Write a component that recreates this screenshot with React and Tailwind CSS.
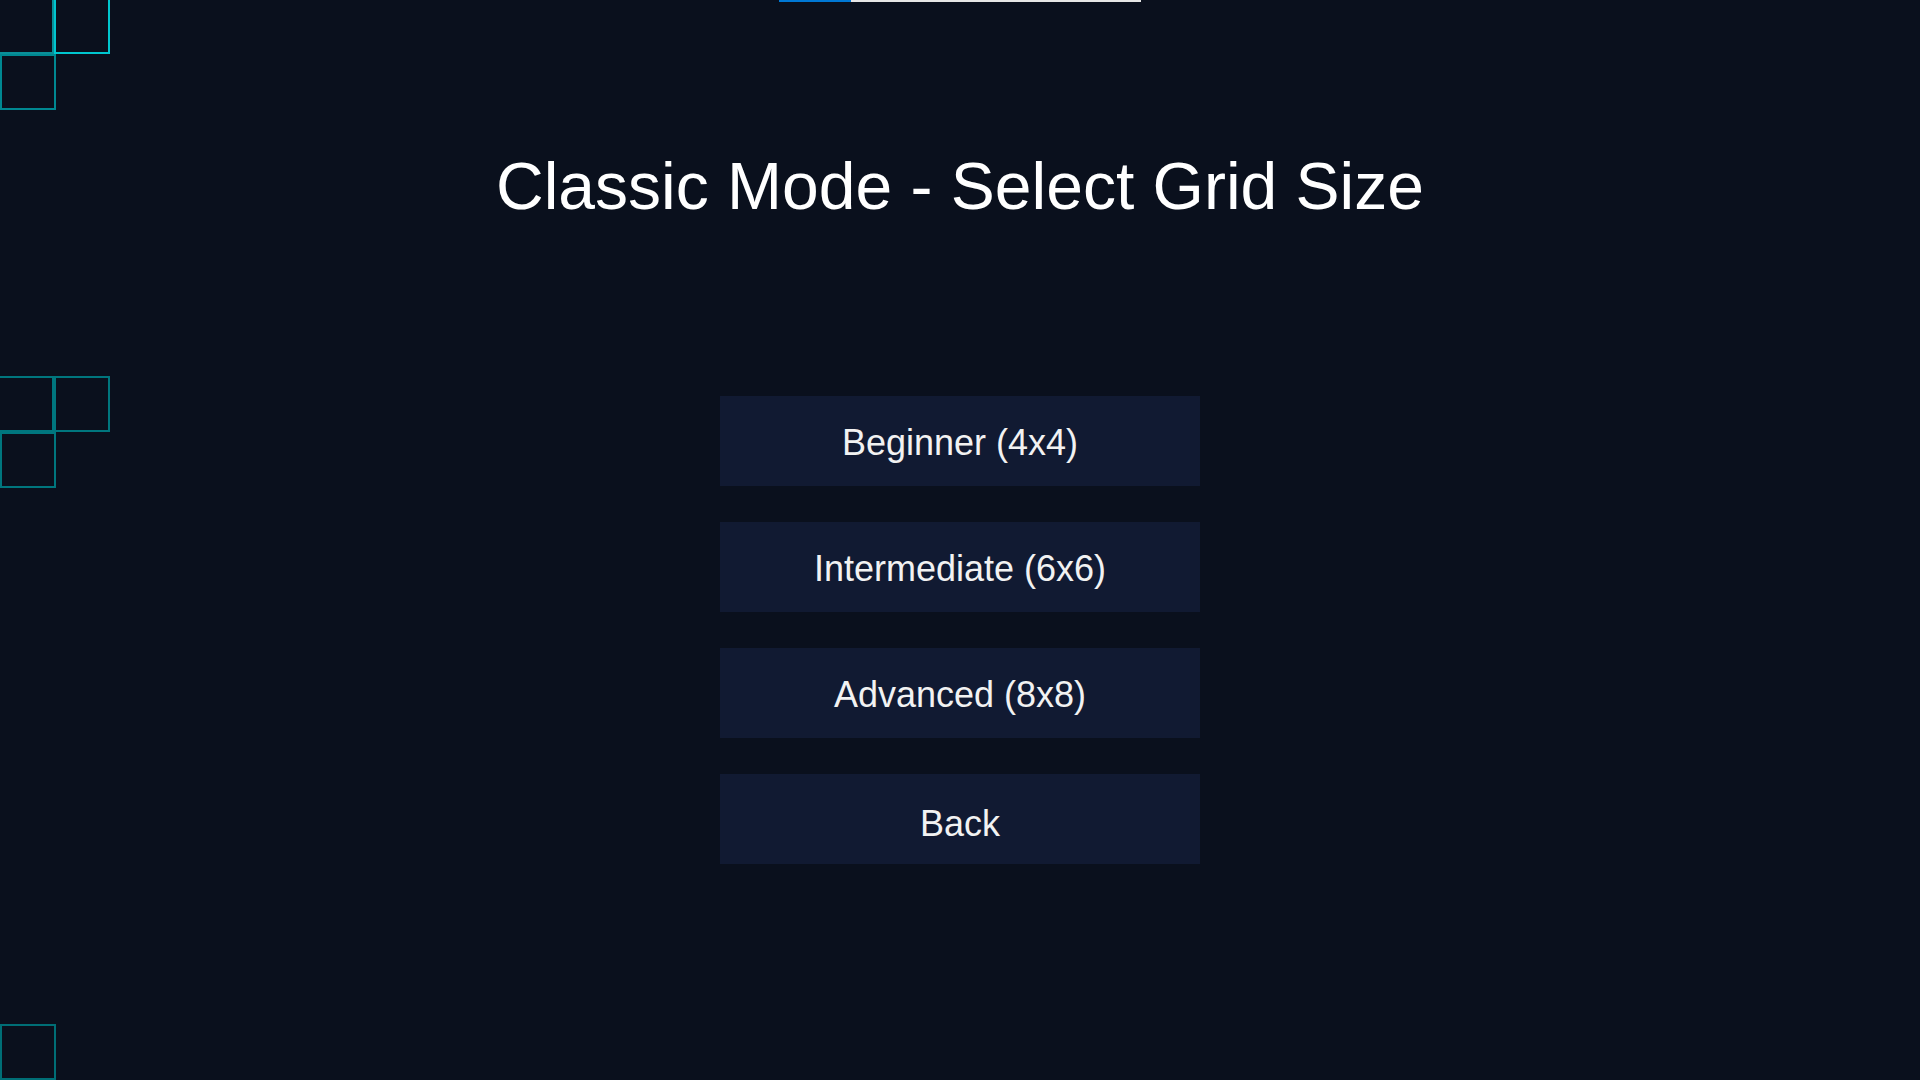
export default function App() {
  const sq = "absolute w-[56px] h-[56px] border-2";
  const btn = "flex h-[90px] w-[480px] items-center justify-center bg-[#111a32] text-[36px] text-[#f2f2f2]";
  return (
    <div className="relative w-full h-[1080px] overflow-hidden bg-[#0a101d]" style={{ fontFamily: '"Liberation Sans", Arial, sans-serif' }}>
      {/* decorative squares */}
      <div className={`${sq} left-[-2px] top-[-2px] border-[#0a8f98]`} />
      <div className={`${sq} left-[54px] top-[-2px] border-[#00c6cf]`} />
      <div className={`${sq} left-0 top-[54px] border-[#008891]`} />

      <div className={`${sq} left-[-2px] top-[376px] border-[#00767e]`} />
      <div className={`${sq} left-[54px] top-[376px] border-[#00767e]`} />
      <div className={`${sq} left-0 top-[432px] border-[#00767e]`} />

      <div className={`${sq} left-0 top-[1024px] border-[#006e76]`} />

      <div className="relative flex flex-col items-center">
        <div className="flex h-[2px] w-[362px]">
          <div className="h-full w-[72px] bg-[#0078d4]" />
          <div className="h-full flex-1 bg-[#e6e6e6]" />
        </div>
        <h1 className="mt-[151px] text-[66px] leading-none font-normal text-white">
          Classic Mode - Select Grid Size
        </h1>
        <div className="mt-[177px] flex flex-col gap-[36px]">
          {["Beginner (4x4)", "Intermediate (6x6)", "Advanced (8x8)"].map((t) => (
            <button key={t} className={`${btn} pt-[4px]`}>
              {t}
            </button>
          ))}
          <button className={`${btn} pt-[9px]`}>Back</button>
        </div>
      </div>
    </div>
  );
}
